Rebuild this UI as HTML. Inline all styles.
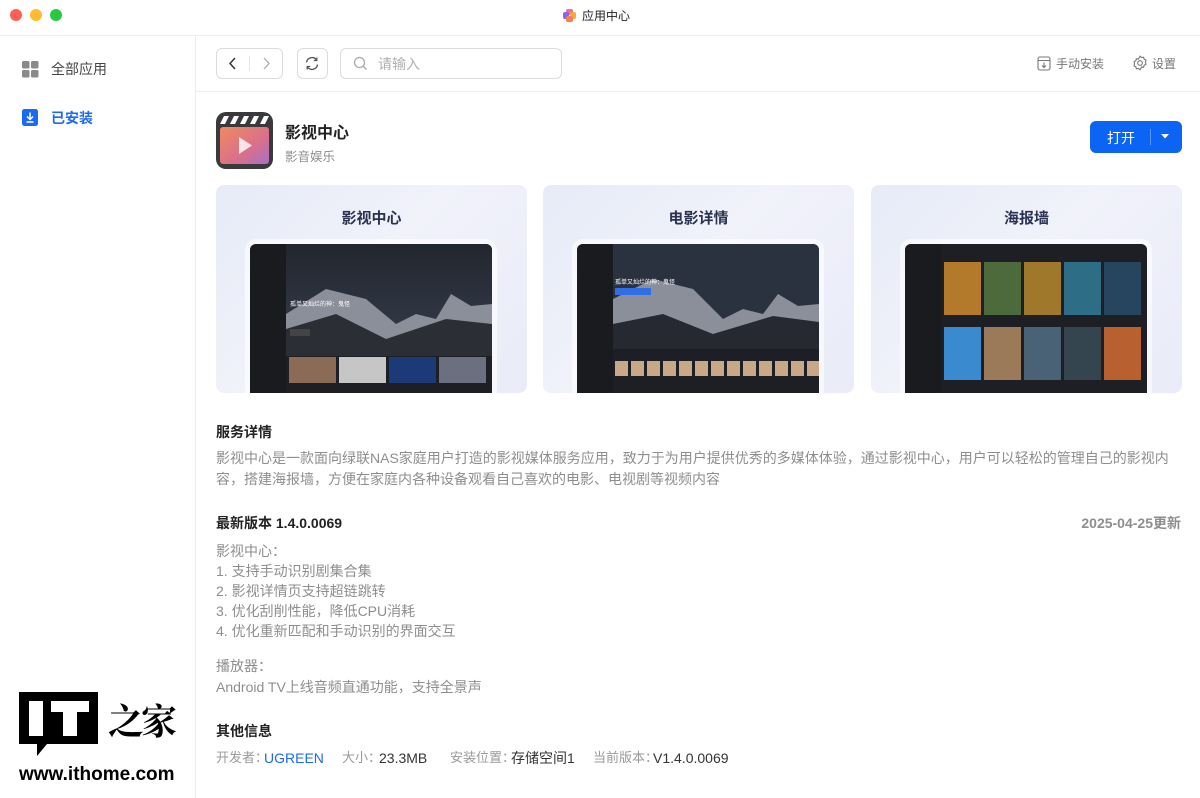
<!DOCTYPE html>
<html><head><meta charset="utf-8"><style>
*{margin:0;padding:0;box-sizing:border-box}
body{width:1200px;height:798px;overflow:hidden;background:#fff;font-family:"Liberation Sans","Noto Sans CJK SC",sans-serif;position:relative;color:#222}
.a{position:absolute;white-space:nowrap}
.dot{position:absolute;top:9px;width:12px;height:12px;border-radius:50%}
.card{position:absolute;top:185px;width:311px;height:208px;border-radius:8px;overflow:hidden;background:linear-gradient(135deg,#e6ebf7 0%,#f1f2fa 45%,#e9ebf8 100%)}
.card .t{position:absolute;top:22px;width:100%;text-align:center;font-size:15px;font-weight:bold;color:#2a3250}
.scr{position:absolute;left:34px;top:59px;width:242px;height:149px;background:#1d1f24;border-radius:6px 6px 0 0;box-shadow:0 0 0 5px rgba(255,255,255,.6);overflow:hidden}
.side{position:absolute;left:0;top:0;width:36px;height:100%;background:#1a1b1f}
.h{font-size:14px;font-weight:bold;color:#222}
.p{font-size:14px;color:#8e8e8e}
.lb{font-size:13px;color:#9a9a9a;top:748px;line-height:20px}
.vl{font-size:14px;color:#333;top:748px;line-height:20px}
</style></head><body>
<div class="dot" style="left:10px;background:#fe5f57"></div>
<div class="dot" style="left:30px;background:#febc2e"></div>
<div class="dot" style="left:50px;background:#28c840"></div>
<svg class="a" style="left:562px;top:8px" width="15" height="15" viewBox="0 0 15 15"><rect x="4" y="1" width="7" height="6" rx="2" fill="#e86ea0"/><rect x="1" y="4" width="6" height="7" rx="2" fill="#8b63e6"/><rect x="8" y="4" width="6" height="7" rx="2" fill="#f4a93a"/><rect x="4" y="8" width="7" height="6" rx="2" fill="#f07f5a"/></svg>
<div class="a" style="left:582px;top:7px;font-size:12px;color:#222">应用中心</div>
<div class="a" style="left:0;top:35px;width:1200px;height:1px;background:#ececec"></div>
<div class="a" style="left:195px;top:36px;width:1px;height:762px;background:#ececec"></div>
<svg class="a" style="left:22px;top:61px" width="17" height="17"><rect x="0" y="0" width="7.5" height="7.5" rx="1.5" fill="#8a8a8a"/><rect x="9" y="0" width="7.5" height="7.5" rx="1.5" fill="#8a8a8a"/><rect x="0" y="9" width="7.5" height="7.5" rx="1.5" fill="#8a8a8a"/><rect x="9" y="9" width="7.5" height="7.5" rx="1.5" fill="#8a8a8a"/></svg>
<div class="a" style="left:51px;top:59px;font-size:14px;color:#444">全部应用</div>
<svg class="a" style="left:22px;top:109px" width="16" height="17"><rect width="16" height="17" rx="2.5" fill="#1d6af2"/><path d="M8 3.5v7M5 7.5l3 3 3-3M4.5 13h7" stroke="#fff" stroke-width="1.5" fill="none"/></svg>
<div class="a" style="left:51px;top:108px;font-size:14px;color:#1d6af2;font-weight:bold">已安装</div>
<div class="a" style="left:216px;top:48px;width:67px;height:31px;border:1px solid #dcdcdc;border-radius:6px"></div>
<div class="a" style="left:249px;top:56px;width:1px;height:15px;background:#e5e5e5"></div>
<svg class="a" style="left:227px;top:56px" width="12" height="15"><path d="M8 2L3 7.5 8 13" stroke="#333" stroke-width="1.5" fill="none"/></svg>
<svg class="a" style="left:260px;top:56px" width="12" height="15"><path d="M4 2l5 5.5L4 13" stroke="#aaa" stroke-width="1.3" fill="none"/></svg>
<div class="a" style="left:297px;top:48px;width:31px;height:31px;border:1px solid #dcdcdc;border-radius:6px"></div>
<svg class="a" style="left:304px;top:56px" width="16" height="15" viewBox="0 0 16 15"><path d="M2.5 6.5A5.5 5.5 0 0 1 12.5 4M13.5 8.5A5.5 5.5 0 0 1 3.5 11" stroke="#555" stroke-width="1.3" fill="none"/><path d="M12.8 1.5v3h-3M3.2 13.5v-3h3" stroke="#555" stroke-width="1.3" fill="none"/></svg>
<div class="a" style="left:340px;top:48px;width:222px;height:31px;border:1px solid #dcdcdc;border-radius:6px"></div>
<svg class="a" style="left:353px;top:56px" width="15" height="15"><circle cx="6.5" cy="6.5" r="5" stroke="#aaa" stroke-width="1.3" fill="none"/><path d="M10 10l3.5 3.5" stroke="#aaa" stroke-width="1.3"/></svg>
<div class="a" style="left:378px;top:54px;font-size:14px;color:#b0b0b0">请输入</div>
<svg class="a" style="left:1037px;top:56px" width="14" height="15"><rect x="1" y="1" width="12" height="13" rx="2" stroke="#777" stroke-width="1.1" fill="none"/><path d="M1 4.5h12M7 6.5v5M5 9.5l2 2 2-2" stroke="#777" stroke-width="1.1" fill="none"/></svg>
<div class="a" style="left:1056px;top:55px;font-size:12px;color:#777">手动安装</div>
<svg class="a" style="left:1132px;top:55px" width="16" height="16" viewBox="0 0 16 16"><path d="M8 1.2l1.6 1.3 2-.3.6 2 1.8 1-.6 2 .6 2-1.8 1-.6 2-2-.3L8 14.8 6.4 13.5l-2 .3-.6-2-1.8-1 .6-2-.6-2 1.8-1 .6-2 2 .3z" stroke="#777" stroke-width="1.1" fill="none"/><circle cx="8" cy="8" r="2.3" stroke="#777" stroke-width="1.1" fill="none"/></svg>
<div class="a" style="left:1152px;top:55px;font-size:12px;color:#777">设置</div>
<div class="a" style="left:196px;top:91px;width:1004px;height:1px;background:#ededed"></div>
<svg class="a" style="left:216px;top:112px" width="57" height="57" viewBox="0 0 57 57"><defs><linearGradient id="ig" x1="0" y1="0" x2="1" y2="1"><stop offset="0" stop-color="#f08a60"/><stop offset=".6" stop-color="#d9708a"/><stop offset="1" stop-color="#a870c8"/></linearGradient></defs><rect x="0" y="0" width="57" height="57" rx="10" fill="#3a3a3c"/><g fill="#fff"><path d="M8 4h5l-4 8H4z"/><path d="M18 4h5l-4 8h-5z"/><path d="M28 4h5l-4 8h-5z"/><path d="M38 4h5l-4 8h-5z"/><path d="M48 4h5l-4 8h-5z"/></g><rect x="4" y="15" width="49" height="37" rx="3" fill="url(#ig)"/><path d="M23 25v17l13-8.5z" fill="#fbe3ea"/></svg>
<div class="a" style="left:285px;top:119px;font-size:16px;font-weight:bold;color:#222">影视中心</div>
<div class="a" style="left:285px;top:146px;font-size:12.5px;color:#8e8e8e">影音娱乐</div>
<div class="a" style="left:1090px;top:121px;width:92px;height:32px;background:#0c64f5;border-radius:6px"></div>
<div class="a" style="left:1107px;top:128px;font-size:14px;color:#fff">打开</div>
<div class="a" style="left:1150px;top:129px;width:1px;height:16px;background:#5b95f8"></div>
<svg class="a" style="left:1161px;top:134px" width="8" height="5"><path d="M0 0h8L4 4.5z" fill="#fff"/></svg>
<div class="card" style="left:216px"><div class="t">影视中心</div>
<div class="scr"><div class="side"></div>
<svg style="position:absolute;left:36px;top:0" width="206" height="149"><defs><linearGradient id="sk" x1="0" y1="0" x2="0" y2="1"><stop offset="0" stop-color="#22262e"/><stop offset="1" stop-color="#3c4658"/></linearGradient></defs><rect width="206" height="149" fill="url(#sk)"/><path d="M0 70 L40 45 L80 55 L110 80 L130 70 L150 75 L165 50 L185 62 L206 60 V149 H0z" fill="#8a8f9a"/><path d="M0 85 L50 70 L100 95 L160 75 L206 80 V149 H0z" fill="#2b2e35"/><rect x="0" y="112" width="206" height="37" fill="#1d1f24"/><rect x="3" y="113" width="47" height="26" fill="#8b6b55"/><rect x="53" y="113" width="47" height="26" fill="#c6c6c6"/><rect x="103" y="113" width="47" height="26" fill="#1c3a78"/><rect x="153" y="113" width="47" height="26" fill="#6b6f80"/><text x="4" y="62" font-size="6" fill="#fff" font-family="Noto Sans CJK SC">孤单又灿烂的神：鬼怪</text><rect x="4" y="85" width="20" height="7" fill="#444"/></svg></div></div>
<div class="card" style="left:543px"><div class="t">电影详情</div>
<div class="scr"><div class="side"></div>
<svg style="position:absolute;left:36px;top:0" width="206" height="149"><rect width="206" height="149" fill="#2a313f"/><path d="M0 55 L40 35 L80 45 L110 75 L130 65 L150 70 L165 50 L185 62 L206 60 V149 H0z" fill="#8a8f9a"/><path d="M0 80 L50 70 L100 90 L160 72 L206 78 V149 H0z" fill="#262931"/><rect x="0" y="105" width="206" height="44" fill="#1d1f24"/><rect x="2" y="44" width="36" height="7" fill="#2f6ee6"/><g fill="#c9a88a"><rect x="2" y="117" width="13" height="15"/><rect x="18" y="117" width="13" height="15"/><rect x="34" y="117" width="13" height="15"/><rect x="50" y="117" width="13" height="15"/><rect x="66" y="117" width="13" height="15"/><rect x="82" y="117" width="13" height="15"/><rect x="98" y="117" width="13" height="15"/><rect x="114" y="117" width="13" height="15"/><rect x="130" y="117" width="13" height="15"/><rect x="146" y="117" width="13" height="15"/><rect x="162" y="117" width="13" height="15"/><rect x="178" y="117" width="13" height="15"/><rect x="194" y="117" width="13" height="15"/></g><text x="2" y="40" font-size="6" fill="#fff" font-family="Noto Sans CJK SC">孤单又灿烂的神：鬼怪</text></svg></div></div>
<div class="card" style="left:871px"><div class="t">海报墙</div>
<div class="scr"><div class="side"></div>
<svg style="position:absolute;left:36px;top:0" width="206" height="149"><rect width="206" height="149" fill="#1d1f24"/><rect x="3" y="18" width="37" height="53" fill="#b47a2c"/><rect x="43" y="18" width="37" height="53" fill="#4d6a3c"/><rect x="83" y="18" width="37" height="53" fill="#a0782c"/><rect x="123" y="18" width="37" height="53" fill="#2d6e86"/><rect x="163" y="18" width="37" height="53" fill="#284560"/><rect x="3" y="83" width="37" height="53" fill="#3a8ad0"/><rect x="43" y="83" width="37" height="53" fill="#9a7a58"/><rect x="83" y="83" width="37" height="53" fill="#4a6275"/><rect x="123" y="83" width="37" height="53" fill="#354550"/><rect x="163" y="83" width="37" height="53" fill="#b86030"/></svg></div></div>
<div class="a h" style="left:216px;top:422px">服务详情</div>
<div class="a p" style="left:216px;top:448px;line-height:21px;white-space:normal;width:970px">影视中心是一款面向绿联NAS家庭用户打造的影视媒体服务应用，致力于为用户提供优秀的多媒体体验，通过影视中心，用户可以轻松的管理自己的影视内容，搭建海报墙，方便在家庭内各种设备观看自己喜欢的电影、电视剧等视频内容</div>
<div class="a h" style="left:216px;top:513px">最新版本 1.4.0.0069</div>
<div class="a" style="right:19px;top:513px;font-size:14px;font-weight:bold;color:#8e8e8e">2025-04-25更新</div>
<div class="a p" style="left:216px;top:541px;line-height:20px">影视中心：<br>1. 支持手动识别剧集合集<br>2. 影视详情页支持超链跳转<br>3. 优化刮削性能，降低CPU消耗<br>4. 优化重新匹配和手动识别的界面交互</div>
<div class="a p" style="left:216px;top:656px;line-height:21px">播放器：<br>Android TV上线音频直通功能，支持全景声</div>
<div class="a h" style="left:216px;top:721px">其他信息</div>
<div class="a lb" style="left:216px">开发者：</div>
<div class="a vl" style="left:264px;color:#1d6af2">UGREEN</div>
<div class="a lb" style="left:342px">大小：</div>
<div class="a vl" style="left:379px">23.3MB</div>
<div class="a lb" style="left:450px">安装位置：</div>
<div class="a vl" style="left:511px">存储空间1</div>
<div class="a lb" style="left:593px">当前版本：</div>
<div class="a vl" style="left:653px">V1.4.0.0069</div>
<svg class="a" style="left:19px;top:692px" width="80" height="66"><path d="M0 0h79v52H28l-10 12V52H0z" fill="#000"/><rect x="10" y="9" width="14" height="35" fill="#fff"/><rect x="32" y="9" width="38" height="11" fill="#fff"/><rect x="44" y="9" width="14" height="35" fill="#fff"/></svg>
<div class="a" style="left:108px;top:694px;font-size:36px;font-weight:bold;font-family:'Noto Serif CJK SC',serif;color:#000;letter-spacing:-3px">之家</div>
<div class="a" style="left:19px;top:764px;font-size:19px;font-weight:bold;color:#000">www.ithome.com</div>
</body></html>
